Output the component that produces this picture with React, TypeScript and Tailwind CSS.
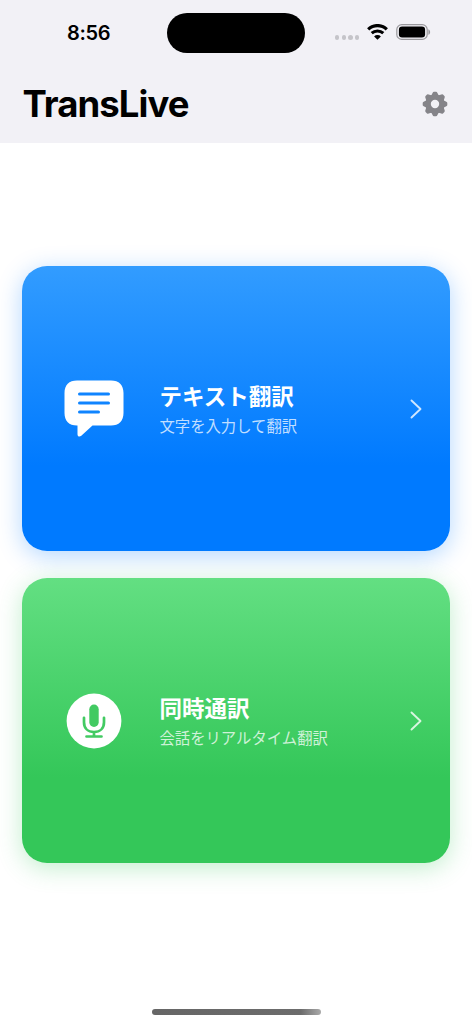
import type { ReactNode } from "react";

function StatusBar() {
  return (
    <div className="flex h-[65px] items-start justify-between pt-3">
      <div className="mt-[9px] w-[167px] pl-[67px] text-[20px] leading-6 font-semibold tracking-[-0.3px]">
        8:56
      </div>
      <div className="mt-px h-10 w-[138px] rounded-full bg-black" />
      <div className="mt-3 flex w-[167px] items-center pl-[30px]">
        <div className="mt-[11px] flex gap-[2.4px]">
          <span className="size-[4.3px] rounded-full bg-[#c5c4c9]" />
          <span className="size-[4.3px] rounded-full bg-[#c5c4c9]" />
          <span className="size-[4.3px] rounded-full bg-[#c5c4c9]" />
          <span className="size-[4.3px] rounded-full bg-[#c5c4c9]" />
        </div>
        <svg className="ml-2 h-4 w-[21px]" viewBox="0 0 21 16" fill="none">
          <path d="M1.2 5.3a13.4 13.4 0 0 1 18.6 0" stroke="#000" strokeWidth="3.2" />
          <path d="M4.7 9.2a8.4 8.4 0 0 1 11.6 0" stroke="#000" strokeWidth="3" />
          <path d="M10.5 15.8 7.1 12.4a4.8 4.8 0 0 1 6.8 0z" fill="#000" />
        </svg>
        <svg className="ml-2 h-4 w-[35px]" viewBox="0 0 35 16">
          <rect x="0.8" y="0.6" width="30.4" height="14.8" rx="5" fill="none" stroke="#99989c" strokeWidth="1.2" />
          <rect x="2.9" y="2.6" width="26.2" height="10.8" rx="3.2" />
          <path d="M32.4 5.2c2.3 0.9 2.3 4.7 0 5.6z" fill="#99989c" />
        </svg>
      </div>
    </div>
  );
}

function GearIcon() {
  const angles = [0, 45, 90, 135, 180, 225, 270, 315];
  return (
    <svg className="size-[26px]" viewBox="-13 -13 26 26">
      <g fill="#858489">
        {angles.map((a) => (
          <path
            key={a}
            transform={`rotate(${a})`}
            d="M-4 -8 L-2.3 -11.3 Q-2 -12.3 -1 -12.3 H1 Q2 -12.3 2.3 -11.3 L4 -8z"
          />
        ))}
      </g>
      <circle r="6.9" fill="none" stroke="#858489" strokeWidth="5.4" />
    </svg>
  );
}

function BubbleIcon() {
  return (
    <svg className="h-[58px] w-[60px]" viewBox="0 0 60 58">
      <path
        d="M13 .5h34c8 0 12.5 4.5 12.5 12.5v20c0 8-4.5 12.5-12.5 12.5H28.5L17.3 55.7c-1.7 1.5-3.8.9-3.8-1.5v-8.7H13C5 45.5.5 41 .5 33V13C.5 5 5 .5 13 .5z"
        fill="#fff"
      />
      <path d="M15.5 14h29M15.5 23h29M15.5 32h19" stroke="#0f84ff" strokeWidth="3" strokeLinecap="round" />
    </svg>
  );
}

function MicIcon() {
  return (
    <svg className="size-[56px]" viewBox="0 0 56 56">
      <circle cx="28" cy="28" r="27.4" fill="#fff" />
      <rect x="23.3" y="11.5" width="9.4" height="22.5" rx="4.7" fill="#42ca62" />
      <path
        d="M18 24.8v4.4c0 6 4 9.8 10 9.8s10-3.8 10-9.8v-4.4M28 39v4.5M20.5 43.5h15"
        fill="none"
        stroke="#42ca62"
        strokeWidth="2.7"
        strokeLinecap="round"
      />
    </svg>
  );
}

interface CardProps {
  icon: ReactNode;
  title: string;
  subtitle: string;
  className: string;
}

function ModeCard({ icon, title, subtitle, className }: CardProps) {
  return (
    <button className={`flex h-[285px] w-full items-center rounded-[25px] pr-[28.5px] pl-[34px] text-left text-white ${className}`}>
      <div className="flex w-[75px] justify-center">{icon}</div>
      <div className="mb-px ml-[28.5px] flex-1 font-['Noto_Sans_CJK_JP',sans-serif]">
        <h2 className="text-[22.5px] leading-[30px] font-bold">{title}</h2>
        <p className="mt-1 text-[15.35px] leading-[22px] text-white/75">{subtitle}</p>
      </div>
      <svg className="h-5 w-3" viewBox="0 0 12 20" fill="none">
        <path
          d="M1.5 1.5 10.5 10 1.5 18.5"
          stroke="#fff"
          strokeOpacity="0.8"
          strokeWidth="1.9"
          strokeLinecap="round"
          strokeLinejoin="round"
        />
      </svg>
    </button>
  );
}

export default function App() {
  return (
    <div className="flex h-[1024px] w-[472px] flex-col overflow-hidden bg-white font-['Inter',sans-serif] text-black">
      <header className="h-[142.5px] bg-[#f2f1f6]">
        <StatusBar />
        <div className="flex h-[78px] items-center justify-between pr-[24px] pl-[22.5px]">
          <h1 className="text-[36.5px] leading-none font-bold tracking-[-0.95px]">TransLive</h1>
          <GearIcon />
        </div>
      </header>
      <main className="flex flex-1 flex-col gap-[27px] px-[22px] pt-[123.5px]">
        <ModeCard
          icon={<BubbleIcon />}
          title="テキスト翻訳"
          subtitle="文字を入力して翻訳"
          className="bg-[linear-gradient(180deg,#329cff_0%,#007aff_70%)] shadow-[0_5px_24px_rgba(0,122,255,0.3)]"
        />
        <ModeCard
          icon={<MicIcon />}
          title="同時通訳"
          subtitle="会話をリアルタイム翻訳"
          className="bg-[linear-gradient(180deg,#63df82_0%,#34c759_70%)] shadow-[0_5px_24px_rgba(52,199,89,0.3)]"
        />
      </main>
      <footer className="flex justify-center pb-[9px]">
        <div className="h-[6px] w-[169px] rounded-full bg-[linear-gradient(90deg,#666_0%,#6c6c6c_88%,#aaa_100%)]" />
      </footer>
    </div>
  );
}
